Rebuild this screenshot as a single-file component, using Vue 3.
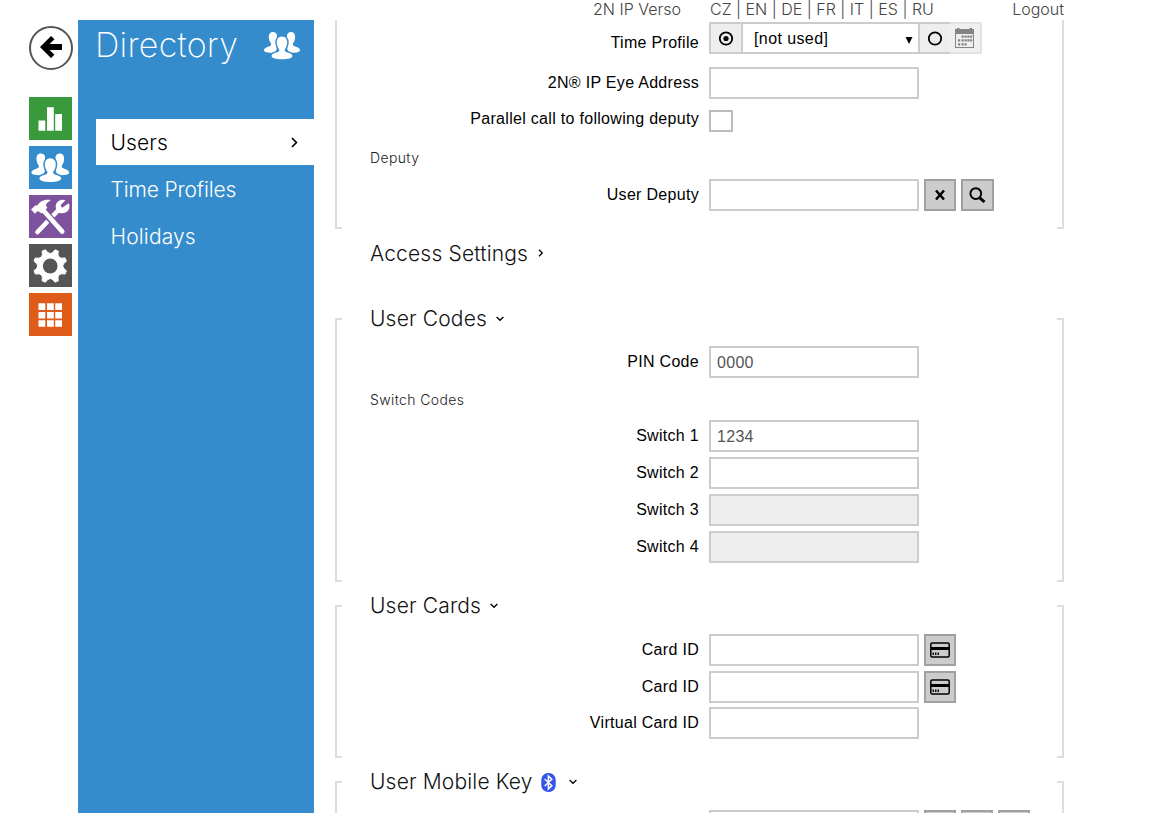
<script setup>
const languages = ['CZ', 'EN', 'DE', 'FR', 'IT', 'ES', 'RU']
const modules = ['status', 'directory', 'hardware', 'services', 'system']
const switches = [
  { label: 'Switch 1', value: '1234' },
  { label: 'Switch 2', value: '' },
  { label: 'Switch 3', value: '', disabled: true },
  { label: 'Switch 4', value: '', disabled: true },
]

// Eight-toothed cog centred in a 43x43 tile
function cog(cx, cy) {
  const at = (deg, r) => {
    const a = (deg * Math.PI) / 180
    return `${(cx + r * Math.cos(a)).toFixed(2)} ${(cy + r * Math.sin(a)).toFixed(2)}`
  }
  let d = ''
  for (let i = 0; i < 8; i++) {
    const a = 22.5 + i * 45
    d += `${i ? 'L' : 'M'}${at(a - 6, 16.9)}L${at(a + 6, 16.9)}Q${at(a + 22.5, 8.8)} ${at(a + 39, 16.9)}`
  }
  return d + 'Z'
}
const cogPath = cog(21.2, 22)
</script>

<template>
  <div class="page">
    <div class="rail">
      <button class="back" aria-label="Back">
        <svg width="22" height="22" viewBox="0 0 22 22"><path d="M0 11 L11 0 L14.5 3.2 L9.6 8 H22 V14 H9.6 L14.5 18.8 L11 22 Z" /></svg>
      </button>
      <div v-for="m in modules" :key="m" class="tile" :class="m">
        <svg width="43" height="43" viewBox="0 0 43 43" fill="#fff">
          <path v-if="m === 'status'" d="M9.500 23.500h6.800v10.200h-6.800zM18 10.300h6.800v23.400h-6.800zM26.200 17h6.800v16.700h-6.800z" />
          <g v-else-if="m === 'directory'" transform="translate(2.4 7.4) scale(1.05)">
            <path d="M9 0C5.8 0 4.6 2.6 4.9 6C5.1 8.6 6.2 10.2 7 11.5C7.6 13 6.8 13.8 4.8 14.5C1.8 15.4 0 16.5 0 18.3C0 20 3 20.9 7.5 20.8C12 20.6 13 18 13 14V3C12.4 1 11 0 9 0Z" />
            <path d="M27 0C30.2 0 31.4 2.6 31.1 6C30.9 8.6 29.8 10.2 29 11.5C28.4 13 29.2 13.8 31.2 14.5C34.2 15.4 36 16.5 36 18.3C36 20 33 20.9 28.5 20.8C24 20.6 23 18 23 14V3C23.6 1 25 0 27 0Z" />
            <path stroke="#358ccc" stroke-width="3" paint-order="stroke" d="M18 4.6C14.4 4.6 12.6 7.4 12.8 11C13 14 14.2 16 15.2 17.4C15.8 19.3 14.2 19.9 12 20.6C9.2 21.4 7.6 22.4 7.6 24C7.6 26.2 12 27.3 18 27.3C24 27.3 28.4 26.2 28.4 24C28.4 22.4 26.8 21.4 24 20.6C21.8 19.9 20.2 19.3 20.8 17.4C21.8 16 23 14 23.2 11C23.4 7.4 21.6 4.6 18 4.6Z" />
          </g>
          <g v-else-if="m === 'hardware'">
            <path d="M8.500 37L29.500 15" stroke="#fff" stroke-width="4.600" stroke-linecap="round" />
            <path d="M36.500 5.200L31.500 10.200L33.200 12.800L39.800 8.200C41.300 12 40 16 36.400 17.600C33.600 18.800 30.500 18.300 28.200 16.400C26 12.700 26.300 9 29 6.500C31.200 4.500 34 4.200 36.500 5.200Z" />
            <path d="M13.500 15L34 37.500" stroke="#7f529d" stroke-width="7.500" />
            <path d="M14 15L33.300 36.600" stroke="#fff" stroke-width="4.600" stroke-linecap="round" />
            <path d="M2 14.500L6.300 10.500L8.300 10.600C10.500 6.500 15 4 21.800 5L17.800 8.200C16.400 9.600 17 11.200 18.400 12.700L12.600 18.600C11 17 9.700 16 8.400 16.200L6 18.800Z" />
          </g>
          <g v-else-if="m === 'services'">
            <path :d="cogPath" stroke="#fff" stroke-width="1" stroke-linejoin="round" />
            <circle cx="21.2" cy="22" r="7.4" fill="#555" />
          </g>
          <path v-else d="M9.5 10.3h6.8v6.6H9.5zM18 10.3h6.8v6.6H18zM26.2 10.3H33v6.6h-6.8zM9.5 19h6.8v6.5H9.5zM18 19h6.8v6.5H18zM26.2 19H33v6.5h-6.8zM9.5 27.3h6.8v6.5H9.5zM18 27.3h6.8v6.5H18zM26.2 27.3H33v6.5h-6.8z" />
        </svg>
      </div>
    </div>

    <aside class="sidebar">
      <div class="title">
        <h1>Directory</h1>
        <svg width="36" height="28" viewBox="0 0 36 28" fill="#fff">
          <path d="M9 0C5.8 0 4.6 2.6 4.9 6C5.1 8.6 6.2 10.2 7 11.5C7.6 13 6.8 13.8 4.8 14.5C1.8 15.4 0 16.5 0 18.3C0 20 3 20.9 7.5 20.8C12 20.6 13 18 13 14V3C12.4 1 11 0 9 0Z" />
          <path d="M27 0C30.2 0 31.4 2.6 31.1 6C30.9 8.6 29.8 10.2 29 11.5C28.4 13 29.2 13.8 31.2 14.5C34.2 15.4 36 16.5 36 18.3C36 20 33 20.9 28.5 20.8C24 20.6 23 18 23 14V3C23.6 1 25 0 27 0Z" />
          <path stroke="#358ccc" stroke-width="3" paint-order="stroke" d="M18 4.6C14.4 4.6 12.6 7.4 12.8 11C13 14 14.2 16 15.2 17.4C15.8 19.3 14.2 19.9 12 20.6C9.2 21.4 7.6 22.4 7.6 24C7.6 26.2 12 27.3 18 27.3C24 27.3 28.4 26.2 28.4 24C28.4 22.4 26.8 21.4 24 20.6C21.8 19.9 20.2 19.3 20.8 17.4C21.8 16 23 14 23.2 11C23.4 7.4 21.6 4.6 18 4.6Z" />
        </svg>
      </div>
      <nav>
        <a class="active">Users
          <svg width="7" height="11" viewBox="0 0 7 11" fill="none" stroke="#000" stroke-width="1.7"><path d="M1 1L5.4 5.5L1 10" /></svg>
        </a>
        <a>Time Profiles</a>
        <a class="holidays">Holidays</a>
      </nav>
    </aside>

    <main>
      <header>
        <span class="device">2N IP Verso</span>
        <span class="langs"><template v-for="(l, i) in languages" :key="l"><template v-if="i"> | </template>{{ l }}</template></span>
        <span class="logout">Logout</span>
      </header>

      <section class="group first">
        <i class="bracket left"></i>
        <div class="body">
          <div class="row time">
            <label>Time Profile</label>
            <div class="combo">
              <span class="seg"><svg width="16" height="16" viewBox="0 0 16 16"><circle cx="8" cy="8.500" r="6.200" fill="none" stroke="#000" stroke-width="1.800" /><circle cx="8" cy="8.500" r="2.600" /></svg></span>
              <span class="select">[not used]<svg width="8" height="7" viewBox="0 0 8 7"><path d="M.5 0H7.500L4 7Z" /></svg></span>
              <span class="seg second"><svg width="16" height="16" viewBox="0 0 16 16"><circle cx="8" cy="8.500" r="6.200" fill="none" stroke="#000" stroke-width="1.800" /></svg></span>
              <span class="seg cal">
                <svg width="19" height="20" viewBox="0 0 19 20" fill="#858585">
                  <path fill-rule="evenodd" d="M0 1H2V0H4.500V1H14.500V0H17V1H19V20H0ZM1 6V19H18V6Z" />
                  <path d="M6.500 7.500h2.200v2.200H6.500zM9.500 7.500h2.200v2.200H9.500zM12.300 7.500h2.200v2.200h-2.200zM15 7.500h2.200v2.200H15zM3 11.300h2.200v2.200H3zM6.500 11.300h2.200v2.200H6.500zM9.500 11.300h2.200v2.200H9.500zM12.300 11.300h2.200v2.200h-2.200zM15 11.300h2.200v2.200H15zM3 15.300h2.200v2.200H3zM6.500 15.300h2.200v2.200H6.500zM9.500 15.300h2.200v2.200H9.500z" />
                </svg>
              </span>
            </div>
          </div>
          <div class="row eye"><label>2N® IP Eye Address</label><div class="input"></div></div>
          <div class="row parallel"><label>Parallel call to following deputy</label><div class="check"></div></div>
          <h3 class="deputy">Deputy</h3>
          <div class="row">
            <label>User Deputy</label>
            <div class="input"></div>
            <button class="btn" aria-label="Clear"><svg width="12" height="12" viewBox="0 0 12 12"><path d="M2 1.500L10 10.500M10 1.500L2 10.500" stroke="#000" stroke-width="2.600" /></svg></button>
            <button class="btn wide" aria-label="Search"><svg width="17" height="17" viewBox="0 0 17 17" fill="none" stroke="#000"><circle cx="6.800" cy="6.600" r="5.400" stroke-width="1.900" /><path d="M10.800 10.800L15.500 15" stroke-width="3" /></svg></button>
          </div>
        </div>
        <i class="bracket right"></i>
      </section>

      <h2 class="collapsed">Access Settings
        <svg width="6" height="8" viewBox="0 0 6 8" fill="none" stroke="#000" stroke-width="1.300"><path d="M1 .7L4.300 4L1 7.300" /></svg>
      </h2>

      <section class="group codes">
        <i class="bracket left"></i>
        <div class="body">
          <h2>User Codes <svg class="down" width="8" height="6" viewBox="0 0 8 6"><path d="M.6 1L4 4.300L7.400 1" /></svg></h2>
          <div class="row pin"><label>PIN Code</label><div class="input">0000</div></div>
          <h3 class="switch-codes">Switch Codes</h3>
          <div v-for="s in switches" :key="s.label" class="row stacked">
            <label>{{ s.label }}</label>
            <div class="input" :class="{ disabled: s.disabled }">{{ s.value }}</div>
          </div>
        </div>
        <i class="bracket right"></i>
      </section>

      <section class="group cards">
        <i class="bracket left"></i>
        <div class="body">
          <h2>User Cards <svg class="down" width="8" height="6" viewBox="0 0 8 6"><path d="M.6 1L4 4.300L7.400 1" /></svg></h2>
          <div v-for="n in 2" :key="n" class="row card">
            <label>Card ID</label>
            <div class="input"></div>
            <button class="btn" aria-label="Read card">
              <svg width="20" height="16" viewBox="0 0 20 16"><rect x=".8" y="1" width="18.400" height="14" rx="1.500" fill="none" stroke="#000" stroke-width="1.500" /><path d="M1 5H19V8H1zM2.500 10.500h1.400v2.500H2.500zM5 10.500h1.400v2.500H5zM7.500 10.500h1.400v2.500H7.500z" /></svg>
            </button>
          </div>
          <div class="row virtual"><label>Virtual Card ID</label><div class="input"></div></div>
        </div>
        <i class="bracket right"></i>
      </section>

      <section class="group mobile">
        <i class="bracket left"></i>
        <div class="body">
          <h2>User Mobile Key
            <svg class="bt" width="15" height="19" viewBox="0 0 15 19"><rect x=".3" y="0" width="14.400" height="19" rx="6.800" fill="#3355e8" /><path d="M3.700 6L10.800 12.700L7.400 16V3L10.800 6.300L3.700 13" fill="none" stroke="#fff" stroke-width="1.500" /></svg>
            <svg class="down" width="8" height="6" viewBox="0 0 8 6"><path d="M.6 1L4 4.300L7.400 1" /></svg>
          </h2>
          <div class="row key">
            <label></label><div class="input"></div>
            <button v-for="n in 3" :key="n" class="btn" aria-label="Key action"></button>
          </div>
        </div>
        <i class="bracket right"></i>
      </section>
    </main>
  </div>
</template>

<style>
html, body { margin: 0; background: #fff; overflow: hidden; }
</style>

<style scoped>
.page { display: flex; width: 1151px; height: 813px; overflow: hidden; box-sizing: border-box; font-family: "Liberation Sans", Arial, sans-serif; font-size: 16px; color: #000; }
.page * { box-sizing: border-box; }
svg { display: block; flex: none; }
.rail { flex: none; width: 78px; padding: 26px 0 0 29px; display: flex; flex-direction: column; gap: 6px; }
.back { width: 44px; height: 44px; margin: 0 0 21px; padding: 0 0 2px; border: 2px solid #555; border-radius: 50%; background: #fff; display: flex; align-items: center; justify-content: center; }
.tile { width: 43px; height: 43px; flex: none; }
.status { background: #3a993a; }
.directory { background: #358ccc; }
.hardware { background: #7f529d; }
.services { background: #555; }
.system { background: #de5b1a; }

.sidebar { flex: none; width: 236px; margin-top: 20px; padding-left: 18px; background: #358ccc; color: #fff; font-family: Inter, Roboto, sans-serif; font-weight: 300; }
.title { display: flex; justify-content: space-between; align-items: flex-start; height: 99px; padding: 12px 14px 0 0; }
h1 { margin: -7px 0 0 -1px; font-size: 34px; line-height: 40px; font-weight: 200; letter-spacing: .25px; }
nav a { display: flex; align-items: center; justify-content: space-between; height: 47px; padding: 0 16px 0 14.5px; font-size: 21px; letter-spacing: -.15px; }
nav a.active { height: 46px; margin-bottom: 1px; background: #fff; color: #000; letter-spacing: .1px; }
nav a.holidays { letter-spacing: .15px; }

main { flex: none; width: 729px; margin-left: 21px; display: flex; flex-direction: column; }
header { flex: none; display: flex; height: 20px; line-height: 18px; font-family: Inter, Roboto, sans-serif; font-size: 16px; font-weight: 300; color: #444; white-space: nowrap; }
.device { width: 375px; padding-left: 258px; }
.logout { margin-left: auto; }

.group { flex: none; display: flex; }
.bracket { flex: none; width: 7px; margin-top: 12px; border: 2px solid #ddd; }
.left { border-right: 0; }
.right { border-left: 0; }
.body { flex: 1; padding-left: 28px; }
.first { height: 209px; }
.first .bracket { margin-top: 0; border-top: 0; }
.codes { height: 276px; margin-bottom: 11px; }
.cards { height: 165px; margin-bottom: 11px; }
.mobile { height: 70px; }
.mobile .bracket { border-bottom: 0; }

h2 { flex: none; display: flex; align-items: center; height: 26px; margin: 0; padding-bottom: 2px; font-family: Inter, Roboto, sans-serif; font-size: 21px; font-weight: 300; letter-spacing: .17px; color: #111; }
h2 svg { margin-left: 9px; }
h2 .bt { margin: 2px 0 0 8px; }
h2 .bt + svg { margin-left: 13px; }
.down { fill: none; stroke: #000; stroke-width: 1.3; margin-top: 2px; }
.collapsed { margin: 12px 0 39px 35px; }
.collapsed svg { margin-left: 10px; }
h3 { margin: 0; height: 20px; line-height: 20px; font-family: Inter, Roboto, sans-serif; font-size: 14px; font-weight: 300; color: #222; letter-spacing: .37px; }

.row { display: flex; height: 32px; }
label { flex: none; width: 329px; margin-right: 10px; text-align: right; line-height: 31px; letter-spacing: .3px; white-space: nowrap; }
.input { flex: none; width: 210px; height: 32px; padding-left: 6px; border: 2px solid #ccc; background: #fff; color: #555; line-height: 29px; letter-spacing: .3px; }
.input.disabled { background: #eee; }
.btn { width: 32px; height: 32px; margin: 0 0 0 5px; padding: 0; border: 2px solid #a0a0a0; background: #ccc; display: flex; align-items: center; justify-content: center; }
.btn.wide { width: 33px; }
.check { width: 24px; height: 22px; border: 2px solid #bbb; }

.time { margin-top: 2px; }
.time label { line-height: 41px; }
.combo { display: flex; height: 32px; }
.seg { display: flex; align-items: center; justify-content: center; width: 34px; border: 2px solid #ccc; background: #eee; }
.select { display: flex; align-items: center; justify-content: space-between; width: 175px; padding: 1px 5px 0 11px; border: solid #ccc; border-width: 2px 0; letter-spacing: .4px; }
.select svg { margin-top: 4px; }
.second { width: 32px; border-right: 0; }
.cal { width: 32px; border-color: #e2e2e2; border-left: 0; background: #f0f0f0; padding-right: 1px; }
.eye { margin-top: 13px; }
.parallel { height: 22px; margin-top: 11px; }
.parallel label { line-height: 17px; }
.deputy { margin: 16px 0 11px; }
.pin { margin-top: 14px; }
.switch-codes { margin: 12px 0 10px; }
.stacked { margin-bottom: 5px; }
.card { margin-bottom: 5px; }
h2 + .card { margin-top: 15px; }
.virtual { margin-top: -1px; }
.key { margin-top: 15px; }
</style>
